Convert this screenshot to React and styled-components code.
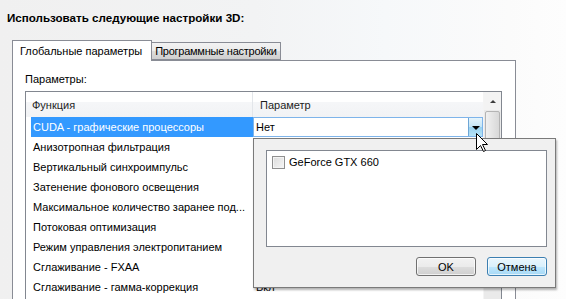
import styled, { createGlobalStyle } from "styled-components";

const GlobalStyle = createGlobalStyle`
  html, body {
    margin: 0;
    padding: 0;
  }
  body {
    font-family: "Liberation Sans", Arial, sans-serif;
    font-size: 11px;
    color: #000;
  }
`;

const Page = styled.div`
  position: relative;
  width: 566px;
  height: 299px;
  overflow: hidden;
  display: flex;
  flex-direction: column;
  background: linear-gradient(
    to right,
    #f0f0f0 0%,
    #f2f3f4 45%,
    #f6f8fa 68%,
    #fbfbfb 90%,
    #fdfdfd 100%
  );
`;

const Title = styled.div`
  font-weight: bold;
  font-size: 11.6px;
  padding: 11px 0 0 7px;
  height: 40px;
  box-sizing: border-box;
`;

const TabStrip = styled.div`
  display: flex;
  align-items: flex-end;
  margin-left: 12px;
  height: 20px;
  position: relative;
  z-index: 1;
`;

const Tab = styled.div`
  box-sizing: border-box;
  height: ${(p) => (p.$active ? "21px" : "18px")};
  margin-bottom: ${(p) => (p.$active ? "-1px" : "0")};
  padding: ${(p) => (p.$active ? "0 9px 1px 7px" : "0 3px 0 3px")};
  letter-spacing: ${(p) => (p.$active ? "0" : "-0.25px")};
  border: 1px solid #898c95;
  border-bottom: ${(p) => (p.$active ? "none" : "1px solid #898c95")};
  border-left: ${(p) => (p.$active ? "1px solid #898c95" : "none")};
  background: ${(p) =>
    p.$active ? "#fff" : "linear-gradient(#f2f2f2, #ebebeb 50%, #dddddd 51%, #cfcfcf)"};
  display: flex;
  align-items: center;
  white-space: nowrap;
`;

const Panel = styled.div`
  flex: 1;
  margin-left: 12px;
  width: 504px;
  box-sizing: border-box;
  border: 1px solid #898c95;
  border-bottom: none;
  background: #fff;
  padding: 11px 0 0 12px;
  display: flex;
  flex-direction: column;
`;

const Label = styled.div`
  height: 19px;
  line-height: 14px;
`;

const ListBox = styled.div`
  flex: 1;
  width: 477px;
  box-sizing: border-box;
  border: 1px solid #828790;
  border-bottom: none;
  display: flex;
`;

const Table = styled.div`
  flex: 1;
  display: flex;
  flex-direction: column;
`;

const HeaderRow = styled.div`
  display: grid;
  grid-template-columns: 227px 1fr;
  height: 25px;
  background: linear-gradient(#ffffff 0%, #ffffff 40%, #f5f6f8 41%, #f2f3f5 100%);
`;

const HeaderCell = styled.div`
  display: flex;
  align-items: center;
  padding-left: ${(p) => (p.$first ? "6px" : "7px")};
  border-right: ${(p) => (p.$first ? "1px solid #e3e6ea" : "none")};
  color: #1e1e1e;
`;

const Row = styled.div`
  display: grid;
  grid-template-columns: 227px 1fr;
  height: 20px;
`;

const NameCell = styled.div`
  margin-left: 5px;
  padding-left: 2px;
  display: flex;
  align-items: center;
  white-space: nowrap;
  overflow: hidden;
  background: ${(p) => (p.$selected ? "#3399ff" : "transparent")};
  color: ${(p) => (p.$selected ? "#fff" : "#000")};
`;

const ValueCell = styled.div`
  display: flex;
  align-items: center;
  padding-left: 3px;
`;

const Combo = styled.div`
  display: flex;
  box-sizing: border-box;
  border: 1px solid #7eb4ea;
  background: #fff;
  height: 20px;
`;

const ComboText = styled.div`
  flex: 1;
  display: flex;
  align-items: center;
  padding-left: 2px;
`;

const DropButton = styled.div`
  width: 14px;
  box-sizing: border-box;
  border-left: 1px solid #6ea6d6;
  background: linear-gradient(#e5f4fc 0%, #c4e5f6 50%, #98d1ef 51%, #b6e3f7 100%);
  display: flex;
  align-items: center;
  justify-content: center;
`;

const Arrow = styled.div`
  width: 0;
  height: 0;
  border-left: 4px solid transparent;
  border-right: 4px solid transparent;
  border-top: 4px solid #000;
  margin-top: 1px;
`;

const Scrollbar = styled.div`
  width: 17px;
  display: flex;
  flex-direction: column;
  background: #eaeaea;
  border-left: 1px solid #f4f4f4;
`;

const ScrollButton = styled.div`
  height: 18px;
  display: flex;
  align-items: center;
  justify-content: center;
  background: #f3f3f3;
`;

const UpArrow = styled.div`
  width: 0;
  height: 0;
  border-left: 3px solid transparent;
  border-right: 3px solid transparent;
  border-bottom: 3px solid #3c3c3c;
`;

const Thumb = styled.div`
  margin: 1px 1px 0 1px;
  height: 150px;
  box-sizing: border-box;
  border: 1px solid #b4b4b4;
  border-radius: 2px;
  background: linear-gradient(to right, #f1f1f1, #e4e4e4 50%, #d8d8d8);
`;

const Popup = styled.div`
  position: absolute;
  left: 253px;
  top: 138px;
  width: 303px;
  height: 150px;
  box-sizing: border-box;
  border: 1px solid #7a7a7a;
  background: #f0f0f0;
  box-shadow: 1px 2px 2px rgba(0, 0, 0, 0.3);
  padding: 11px 8px 11px 12px;
  display: flex;
  flex-direction: column;
  z-index: 2;
`;

const CheckList = styled.div`
  flex: 1;
  box-sizing: border-box;
  border: 1px solid #828790;
  background: #fff;
  padding: 4px 5px;
`;

const CheckItem = styled.div`
  display: flex;
  align-items: center;
  gap: 4px;
  height: 14px;
`;

const CheckBox = styled.div`
  width: 13px;
  height: 13px;
  box-sizing: border-box;
  border: 1px solid #8f8f8f;
  background: linear-gradient(135deg, #dcdcdc, #f6f6f6);
  box-shadow: inset 0 0 0 1px #f4f4f4;
`;

const ButtonRow = styled.div`
  display: flex;
  justify-content: flex-end;
  gap: 11px;
  padding-top: 10px;
`;

const Button = styled.div`
  width: 60px;
  height: 19px;
  box-sizing: border-box;
  border: 1px solid ${(p) => (p.$default ? "#3c7fb1" : "#707070")};
  border-radius: 3px;
  background: ${(p) =>
    p.$default
      ? "linear-gradient(#eaf6fd 0%, #d9f0fc 50%, #bee6fd 51%, #a7d9f5 100%)"
      : "linear-gradient(#f2f2f2 0%, #ebebeb 50%, #dddddd 51%, #cfcfcf 100%)"};
  box-shadow: inset 0 0 0 1px rgba(255, 255, 255, 0.7);
  display: flex;
  align-items: center;
  justify-content: center;
`;

const Cursor = styled.svg`
  position: absolute;
  left: 476px;
  top: 133px;
  z-index: 3;
`;

const rows = [
  "Анизотропная фильтрация",
  "Вертикальный синхроимпульс",
  "Затенение фонового освещения",
  "Максимальное количество заранее под...",
  "Потоковая оптимизация",
  "Режим управления электропитанием",
  "Сглаживание - FXAA",
];

export default function App() {
  return (
    <Page>
      <GlobalStyle />
      <Title>Использовать следующие настройки 3D:</Title>
      <TabStrip>
        <Tab $active>Глобальные параметры</Tab>
        <Tab>Программные настройки</Tab>
      </TabStrip>
      <Panel>
        <Label>Параметры:</Label>
        <ListBox>
          <Table>
            <HeaderRow>
              <HeaderCell $first>Функция</HeaderCell>
              <HeaderCell>Параметр</HeaderCell>
            </HeaderRow>
            <Row>
              <NameCell $selected>CUDA - графические процессоры</NameCell>
              <Combo>
                <ComboText>Нет</ComboText>
                <DropButton>
                  <Arrow />
                </DropButton>
              </Combo>
            </Row>
            {rows.map((r) => (
              <Row key={r}>
                <NameCell>{r}</NameCell>
                <ValueCell />
              </Row>
            ))}
            <Row>
              <NameCell>Сглаживание - гамма-коррекция</NameCell>
              <ValueCell>Вкл</ValueCell>
            </Row>
          </Table>
          <Scrollbar>
            <ScrollButton>
              <UpArrow />
            </ScrollButton>
            <Thumb />
          </Scrollbar>
        </ListBox>
      </Panel>

      <Popup>
        <CheckList>
          <CheckItem>
            <CheckBox />
            GeForce GTX 660
          </CheckItem>
        </CheckList>
        <ButtonRow>
          <Button>OK</Button>
          <Button $default>Отмена</Button>
        </ButtonRow>
      </Popup>

      <Cursor width="13" height="20" viewBox="0 0 13 20">
        <path
          d="M0.5 0.5 L0.5 16.5 L4.5 12.5 L7.5 18.5 L9.5 17.5 L6.5 11.5 L11.5 11.5 Z"
          fill="#fff"
          stroke="#000"
          strokeWidth="1"
          strokeLinejoin="miter"
        />
      </Cursor>
    </Page>
  );
}
